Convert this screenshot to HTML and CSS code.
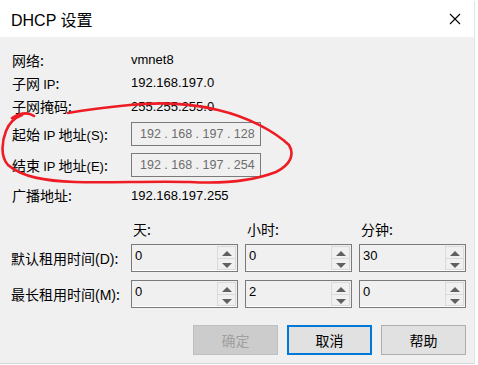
FILE: index.html
```html
<!DOCTYPE html>
<html lang="zh-CN">
<head>
    <meta charset="UTF-8">
    <title>DHCP 设置</title>
    <link rel="stylesheet" href="styles.css">
</head>
<body>
    <div class="window">
        <div class="titlebar">
            <span class="title">DHCP 设置</span>
            <svg class="close" width="12" height="12" viewBox="0 0 12 12">
                <path d="M1 1 L11 11 M11 1 L1 11" stroke="#000" stroke-width="1.1" fill="none"/>
            </svg>
        </div>

        <div class="content">
            <div class="info">
                <div class="row r1"><span class="label">网络:</span><span class="value">vmnet8</span></div>
                <div class="row r2"><span class="label">子网 <span class="lat">IP</span>:</span><span class="value">192.168.197.0</span></div>
                <div class="row r3"><span class="label">子网掩码:</span><span class="value">255.255.255.0</span></div>
                <div class="row r4"><span class="label">起始 <span class="lat">IP</span> 地址<span class="lat">(S)</span>:</span><span class="ipbox">192 . 168 . 197 . 128</span></div>
                <div class="row r5"><span class="label">结束 <span class="lat">IP</span> 地址<span class="lat">(E)</span>:</span><span class="ipbox">192 . 168 . 197 . 254</span></div>
                <div class="row r6"><span class="label">广播地址:</span><span class="value">192.168.197.255</span></div>
            </div>

            <div class="lease">
                <span></span>
                <span class="head">天:</span>
                <span class="head">小时:</span>
                <span class="head">分钟:</span>

                <span class="label">默认租用时间<span class="lat">(D)</span>:</span>
                <div class="spin"><span class="num">0</span><span class="arrows"><i class="up"></i><i class="down"></i></span></div>
                <div class="spin"><span class="num">0</span><span class="arrows"><i class="up"></i><i class="down"></i></span></div>
                <div class="spin"><span class="num">30</span><span class="arrows"><i class="up"></i><i class="down"></i></span></div>

                <span class="label">最长租用时间<span class="lat">(M)</span>:</span>
                <div class="spin"><span class="num">0</span><span class="arrows"><i class="up"></i><i class="down"></i></span></div>
                <div class="spin"><span class="num">2</span><span class="arrows"><i class="up"></i><i class="down"></i></span></div>
                <div class="spin"><span class="num">0</span><span class="arrows"><i class="up"></i><i class="down"></i></span></div>
            </div>

            <div class="buttons">
                <button class="btn disabled">确定</button>
                <button class="btn focused">取消</button>
                <button class="btn">帮助</button>
            </div>
        </div>

        <!-- красная пометка от руки -->
        <svg class="scribble" width="300" height="100" viewBox="0 0 300 100">
            <path d="M12 17 C20 12 28 11 34 15 M68 12 C90 8 110 6 130 4 C160 1 190 2 218 9 C248 16 274 30 289 44 C295 54 290 64 276 71 C255 79 225 83 190 81 C150 80 110 82 75 81 C45 80 22 76 8 64 C0 55 2 40 6 30 C9 22 14 17 22 14"
                  stroke="#ee1c24" stroke-width="2.6" fill="none" stroke-linecap="round" stroke-linejoin="round"/>
        </svg>
    </div>
</body>
</html>
```

FILE: styles.css
```css
body {
    margin: 0;
    background: #fff;
    font-family: "Noto Sans CJK SC", "Liberation Sans", sans-serif;
    color: #000;
}

/* Окно диалога */
.window {
    position: relative;
    width: 474px;
    height: 362px;
    margin-top: 1px;
    background: #f0f0f0;
    border-bottom: 1px solid #d6d6d6;
    border-right: 1px solid #e4e4e4;
}

.titlebar {
    height: 36px;
    background: #fff;
    display: flex;
    align-items: center;
    justify-content: space-between;
    padding: 0 13px 0 11px;
}

.title {
    font-family: "Liberation Sans", "Noto Sans CJK SC", sans-serif;
    font-size: 16px;
    margin-top: -1px;
}

.content {
    padding: 11px 8px 0 12px;
}

.lat {
    font-family: "Liberation Sans", sans-serif;
    font-size: 13px;
}

/* Верхний блок */
.row {
    display: grid;
    grid-template-columns: 119px auto;
    align-items: center;
    font-size: 14px;
}

.r1, .r2 { height: 23px; }
.r3 { height: 24px; }
.r4 { height: 32px; }
.r5 { height: 30px; }
.r6 { height: 30px; }

.label {
    font-size: 14px;
    white-space: nowrap;
}

.value {
    font-family: "Liberation Sans", sans-serif;
    font-size: 13px;
}

.ipbox {
    width: 120px;
    height: 22px;
    border: 1px solid #7a7a7a;
    padding-left: 8px;
    font-family: "Liberation Sans", sans-serif;
    font-size: 12.5px;
    color: #6d6d6d;
    line-height: 22px;
    white-space: pre;
    overflow: hidden;
}

/* Время аренды */
.lease {
    display: grid;
    grid-template-columns: 112px 107px 107px 107px;
    grid-template-rows: 26px 28px 28px;
    column-gap: 7px;
    row-gap: 8px;
    align-items: center;
}

.head {
    font-size: 14px;
    padding-left: 2px;
    align-self: end;
    line-height: 20px;
    margin-bottom: -3px;
}

.lease .label {
    margin-left: -1px;
}

.lease .lat {
    font-size: 14px;
}

.spin {
    height: 26px;
    border: 1px solid #7a7a7a;
    display: flex;
    justify-content: space-between;
    box-shadow: inset 0 -1px 0 #fff;
}

.num {
    font-family: "Liberation Sans", sans-serif;
    font-size: 13px;
    padding: 3px 0 0 3px;
}

.arrows {
    width: 19px;
    display: flex;
    flex-direction: column;
    margin: 1px 1px 1px 0;
}

.arrows i {
    flex: 1;
    border: 1px solid #dadada;
    position: relative;
}

.arrows i + i {
    border-top: none;
}

.arrows i::after {
    content: "";
    position: absolute;
    left: 4px;
    top: 4px;
    border-left: 5px solid transparent;
    border-right: 5px solid transparent;
}

.up::after {
    border-bottom: 5px solid #606060;
}

.down::after {
    border-top: 5px solid #606060;
}

/* Кнопки */
.buttons {
    display: flex;
    justify-content: flex-end;
    gap: 9px;
    margin-top: 17px;
}

.btn {
    width: 85px;
    height: 30px;
    background: #e1e1e1;
    border: 1px solid #adadad;
    font-family: "Noto Sans CJK SC", sans-serif;
    font-size: 14px;
    color: #000;
    padding: 0;
}

.btn.disabled {
    background: #cccccc;
    border-color: #bfbfbf;
    color: #a0a0a0;
}

.btn.focused {
    border: 2px solid #0078d7;
}

/* Пометка поверх */
.scribble {
    position: absolute;
    left: 0;
    top: 100px;
    pointer-events: none;
}
```
